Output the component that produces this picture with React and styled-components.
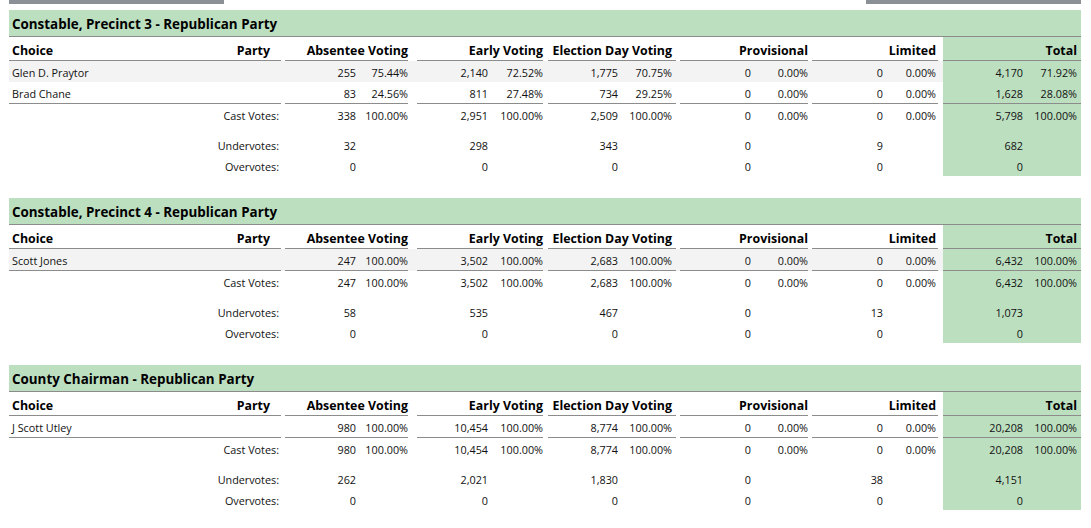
import React from "react";
import styled, { createGlobalStyle } from "styled-components";

const GlobalStyle = createGlobalStyle`
  body {
    margin: 0;
    background: #ffffff;
    font-family: "Open Sans", "Noto Sans", sans-serif;
    color: #111111;
  }
`;

// width of each column group, with the inset of its underline and text
const GROUPS = [
  { label: "Absentee Voting", width: 132, ml: 4, mr: 5, pr: 0, pct: 52 },
  { label: "Early Voting", width: 131, ml: 4, mr: 1, pr: 0, pct: 55 },
  { label: "Election Day Voting", width: 132, ml: 4, mr: 0, pr: 4, pct: 54 },
  { label: "Provisional", width: 132, ml: 4, mr: 0, pr: 0, pct: 57 },
  { label: "Limited", width: 135, ml: 4, mr: 5, pr: 2, pct: 53 },
  { label: "Total", width: 138, ml: 0, mr: 0, pr: 4, pct: 54, total: true },
];

const zeros = ["0", "0", "0", "0", "0", "0"];

const RACES = [
  {
    title: "Constable, Precinct 3 - Republican Party",
    choices: [
      {
        name: "Glen D. Praytor",
        shaded: true,
        vals: [["255", "75.44%"], ["2,140", "72.52%"], ["1,775", "70.75%"], ["0", "0.00%"], ["0", "0.00%"], ["4,170", "71.92%"]],
      },
      {
        name: "Brad Chane",
        vals: [["83", "24.56%"], ["811", "27.48%"], ["734", "29.25%"], ["0", "0.00%"], ["0", "0.00%"], ["1,628", "28.08%"]],
      },
    ],
    cast: [["338", "100.00%"], ["2,951", "100.00%"], ["2,509", "100.00%"], ["0", "0.00%"], ["0", "0.00%"], ["5,798", "100.00%"]],
    under: ["32", "298", "343", "0", "9", "682"],
    over: zeros,
  },
  {
    title: "Constable, Precinct 4 - Republican Party",
    choices: [
      {
        name: "Scott Jones",
        shaded: true,
        vals: [["247", "100.00%"], ["3,502", "100.00%"], ["2,683", "100.00%"], ["0", "0.00%"], ["0", "0.00%"], ["6,432", "100.00%"]],
      },
    ],
    cast: [["247", "100.00%"], ["3,502", "100.00%"], ["2,683", "100.00%"], ["0", "0.00%"], ["0", "0.00%"], ["6,432", "100.00%"]],
    under: ["58", "535", "467", "0", "13", "1,073"],
    over: zeros,
  },
  {
    title: "County Chairman - Republican Party",
    choices: [
      {
        name: "J Scott Utley",
        vals: [["980", "100.00%"], ["10,454", "100.00%"], ["8,774", "100.00%"], ["0", "0.00%"], ["0", "0.00%"], ["20,208", "100.00%"]],
      },
    ],
    cast: [["980", "100.00%"], ["10,454", "100.00%"], ["8,774", "100.00%"], ["0", "0.00%"], ["0", "0.00%"], ["20,208", "100.00%"]],
    under: ["262", "2,021", "1,830", "0", "38", "4,151"],
    over: zeros,
  },
];

const Page = styled.div`
  width: 1072px;
  margin-left: 9px;
`;

const TopBars = styled.div`
  display: flex;
  justify-content: space-between;
  margin-bottom: 6px;
`;

const TopBar = styled.div`
  width: 215px;
  height: 4px;
  background: #8a9096;
`;

const Race = styled.section`
  margin-bottom: 22px;
`;

const RaceTitle = styled.div`
  height: 24px;
  display: flex;
  align-items: center;
  padding: 2px 0 0 3px;
  background: #bcdfc0;
  border-bottom: 1px solid #8c8c8c;
  font-size: 13.4px;
  font-weight: 700;
  color: #000;
  white-space: nowrap;
`;

const Row = styled.div`
  display: grid;
  grid-template-columns: 272px ${GROUPS.map((g) => `${g.width}px`).join(" ")};
  grid-template-rows: ${(p) => p.h}px;
  background: ${(p) => (p.shaded ? "#f3f3f3" : "transparent")};
  white-space: nowrap;
`;

const NameCell = styled.div`
  display: flex;
  align-items: ${(p) => (p.head ? "flex-end" : "center")};
  justify-content: ${(p) => (p.label ? "flex-end" : "space-between")};
  padding: ${(p) => (p.head ? 0 : 1)}px ${(p) => (p.label ? 2 : 11)}px ${(p) => (p.head ? 1 : 0)}px 3px;
  border-bottom: ${(p) => (p.lined ? "1px solid #8c8c8c" : "none")};
  font-size: ${(p) => (p.head ? 12.4 : 10.8)}px;
  font-weight: ${(p) => (p.head ? 700 : 400)};
  color: ${(p) => (p.head ? "#000" : "#111")};
`;

const GroupCell = styled.div`
  display: grid;
  grid-template-columns: 1fr ${(p) => p.pct}px;
  align-items: center;
  justify-items: end;
  margin: 0 ${(p) => p.mr}px 0 ${(p) => p.ml}px;
  padding: 1px ${(p) => p.pr}px 0 0;
  background: ${(p) => (p.total ? "#bcdfc0" : "transparent")};
  border-bottom: ${(p) => (p.lined ? "1px solid #8c8c8c" : "none")};
  font-size: 10.8px;
  color: #111;
`;

const HeadCell = styled(GroupCell)`
  display: flex;
  justify-content: flex-end;
  align-items: flex-end;
  padding-top: 0;
  padding-bottom: 1px;
  font-size: 12.4px;
  font-weight: 700;
  color: #000;
`;

const SpacerCell = styled.div`
  grid-column: 7;
  background: #bcdfc0;
`;

const Groups = ({ vals, lined }) =>
  GROUPS.map((g, i) => {
    const v = vals[i];
    const pair = Array.isArray(v) ? v : [v, ""];
    return (
      <GroupCell key={g.label} {...g} lined={lined}>
        <span>{pair[0]}</span>
        <span>{pair[1]}</span>
      </GroupCell>
    );
  });

const RaceTable = ({ race }) => {
  const last = race.choices.length - 1;
  return (
    <Race>
      <RaceTitle>{race.title}</RaceTitle>
      <Row h={24}>
        <NameCell head lined>
          <span>Choice</span>
          <span>Party</span>
        </NameCell>
        {GROUPS.map((g) => (
          <HeadCell key={g.label} {...g} lined>
            {g.label}
          </HeadCell>
        ))}
      </Row>
      {race.choices.map((c, i) => (
        <Row key={c.name} h={i === last ? 22 : 21} shaded={c.shaded}>
          <NameCell lined={i === last}>
            <span>{c.name}</span>
          </NameCell>
          <Groups vals={c.vals} lined={i === last} />
        </Row>
      ))}
      <Row h={21}>
        <NameCell label>Cast Votes:</NameCell>
        <Groups vals={race.cast} />
      </Row>
      <Row h={9}>
        <SpacerCell />
      </Row>
      <Row h={21}>
        <NameCell label>Undervotes:</NameCell>
        <Groups vals={race.under} />
      </Row>
      <Row h={21}>
        <NameCell label>Overvotes:</NameCell>
        <Groups vals={race.over} />
      </Row>
    </Race>
  );
};

const App = () => (
  <>
    <GlobalStyle />
    <Page>
      <TopBars>
        <TopBar />
        <TopBar />
      </TopBars>
      {RACES.map((r) => (
        <RaceTable key={r.title} race={r} />
      ))}
    </Page>
  </>
);

export default App;
